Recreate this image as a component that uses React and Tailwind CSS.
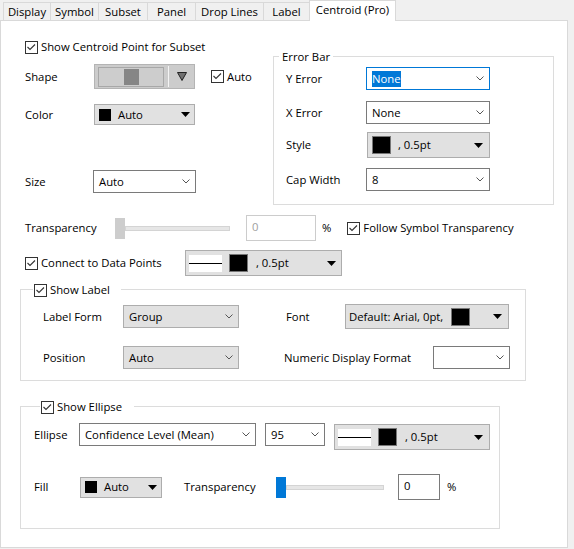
import React from 'react'

const TABS = [
  { label: 'Display', cls: 'w-[47px]' },
  { label: 'Symbol', cls: 'w-[48px]' },
  { label: 'Subset', cls: 'w-[49px]' },
  { label: 'Panel', cls: 'w-[48px]' },
  { label: 'Drop Lines', cls: 'w-[68px]' },
  { label: 'Label', cls: 'w-[46px]' },
]

function Check() {
  return (
    <span className="flex h-[13px] w-[13px] shrink-0 items-center justify-center border border-[#333333] bg-white">
      <svg width="11" height="11" viewBox="0 0 11 11" aria-hidden="true">
        <path d="M1.5 5 L4 7.5 L9 2.5" fill="none" stroke="#333333" strokeWidth="1.1" />
      </svg>
    </span>
  )
}

function Chevron() {
  return (
    <svg width="8" height="5" viewBox="0 0 8 5" aria-hidden="true">
      <path d="M0.5 0.5 L4 4 L7.5 0.5" fill="none" stroke="#555555" strokeWidth="1" />
    </svg>
  )
}

function Arrow() {
  return (
    <svg width="9" height="5" viewBox="0 0 9 5" aria-hidden="true">
      <path d="M0 0 H9 L4.5 5 Z" fill="#000000" />
    </svg>
  )
}

function LineSample() {
  return (
    <span className="flex h-[17px] w-[33px] items-center bg-white">
      <span className="h-px w-full bg-black" />
    </span>
  )
}

function Swatch() {
  return <span className="h-[18px] w-[19px] shrink-0 border border-[#777777] bg-black" />
}

function CheckLabel({ children, className = '' }) {
  return (
    <div className={`flex items-center gap-[3px] ${className}`}>
      <Check />
      <span>{children}</span>
    </div>
  )
}

function Tabs() {
  return (
    <div className="flex h-[21px] items-end">
      <div className="h-full w-[3px] border-b border-[#d9d9d9]" />
      {TABS.map((t) => (
        <div
          key={t.label}
          className={`flex h-[19px] items-center justify-center border-y border-l border-[#d9d9d9] bg-[#f0f0f0] ${t.cls}`}
        >
          {t.label}
        </div>
      ))}
      <div className="flex h-[21px] w-[87px] items-center justify-center border-x border-t border-[#d9d9d9] bg-white pb-[2px]">
        Centroid (Pro)
      </div>
      <div className="h-full flex-1 border-b border-[#d9d9d9]" />
    </div>
  )
}

function ShapeBox() {
  return (
    <div className="flex h-[25px] w-[101px] items-center border border-[#b4b4b4] bg-[#cccccc] pl-[3px]">
      <div className="flex h-[20px] w-[66px] items-center justify-center border border-[#a8a8a8] bg-[#cdcdcd]">
        <span className="h-[16px] w-[15px] bg-[#868686]" />
      </div>
      <span className="ml-[4px] h-[21px] w-px bg-[#f4f4f4]" />
      <svg className="ml-[8px]" width="10" height="9" viewBox="0 0 10 9" aria-hidden="true">
        <path d="M0.5 0.5 H9.5 L5 8.5 Z" fill="#707070" stroke="#222222" strokeWidth="1" />
      </svg>
    </div>
  )
}

function ErrorBar() {
  return (
    <div className="mt-[35px] h-[149px] w-[281px] border border-[#dcdcdc]">
      <div className="-mt-[8px] ml-[5px] w-fit bg-white px-[3px] leading-[16px]">Error Bar</div>
      <div className="flex flex-col pl-[12px]">
        <div className="mt-[2px] flex h-[23px] items-center">
          <span className="w-[80px]">Y Error</span>
          <div className="flex h-[23px] w-[124px] items-center border border-[#0078d7] bg-white pl-[5px] pr-[5px]">
            <span className="bg-[#0078d7] leading-[16px] text-white">None</span>
            <span className="ml-auto flex"><Chevron /></span>
          </div>
        </div>
        <div className="mt-[11px] flex h-[23px] items-center">
          <span className="w-[80px]">X Error</span>
          <div className="flex h-[23px] w-[124px] items-center border border-[#7a7a7a] bg-white pl-[5px] pr-[5px]">
            <span>None</span>
            <span className="ml-auto flex"><Chevron /></span>
          </div>
        </div>
        <div className="mt-[8px] flex h-[26px] items-center">
          <span className="w-[81px]">Style</span>
          <div className="flex h-[26px] w-[123px] items-center border border-[#adadad] bg-[#e1e1e1] pl-[4px] pr-[6px]">
            <Swatch />
            <span className="ml-[7px]">, 0.5pt</span>
            <span className="ml-auto flex"><Arrow /></span>
          </div>
        </div>
        <div className="mt-[10px] flex h-[23px] items-center">
          <span className="w-[80px]">Cap Width</span>
          <div className="flex h-[23px] w-[124px] items-center border border-[#7a7a7a] bg-white pl-[5px] pr-[5px]">
            <span>8</span>
            <span className="ml-auto flex"><Chevron /></span>
          </div>
        </div>
      </div>
    </div>
  )
}

function ShowLabel() {
  return (
    <div className="ml-[19px] mt-[13px] h-[92px] w-[506px] border border-[#dcdcdc]">
      <div className="-mt-[8px] ml-[12px] flex h-[16px] w-fit items-center gap-[3px] bg-white pl-px pr-[11px]">
        <Check />
        <span>Show Label</span>
      </div>
      <div className="mt-[6px] flex h-[25px] items-center pl-[22px]">
        <span className="w-[80px]">Label Form</span>
        <div className="flex h-[23px] w-[116px] items-center border border-[#adadad] bg-[#e1e1e1] pl-[5px] pr-[5px]">
          <span>Group</span>
          <span className="ml-auto flex"><Chevron /></span>
        </div>
        <span className="ml-[47px] w-[59px]">Font</span>
        <div className="flex h-[25px] w-[164px] items-center border border-[#adadad] bg-[#e1e1e1] pl-[3px] pr-[6px]">
          <span className="w-[102px] whitespace-nowrap">Default: Arial, 0pt,</span>
          <Swatch />
          <span className="ml-auto flex"><Arrow /></span>
        </div>
      </div>
      <div className="mt-[17px] flex h-[23px] items-center pl-[22px]">
        <span className="w-[80px]">Position</span>
        <div className="flex h-[23px] w-[116px] items-center border border-[#adadad] bg-[#e1e1e1] pl-[5px] pr-[5px]">
          <span>Auto</span>
          <span className="ml-auto flex"><Chevron /></span>
        </div>
        <span className="ml-[45px] w-[149px]">Numeric Display Format</span>
        <div className="flex h-[23px] w-[77px] items-center border border-[#7a7a7a] bg-white pr-[5px]">
          <span className="ml-auto flex"><Chevron /></span>
        </div>
      </div>
    </div>
  )
}

function ShowEllipse() {
  return (
    <div className="ml-[19px] mt-[25px] h-[123px] w-[480px] border border-[#dcdcdc]">
      <div className="-mt-[8px] ml-[19px] flex h-[16px] w-fit items-center gap-[3px] bg-white pl-px pr-[12px]">
        <Check />
        <span>Show Ellipse</span>
      </div>
      <div className="mt-[8px] flex h-[26px] items-start pl-[13px]">
        <span className="flex h-[23px] w-[45px] items-center">Ellipse</span>
        <div className="flex h-[23px] w-[177px] items-center border border-[#7a7a7a] bg-white pl-[5px] pr-[5px]">
          <span>Confidence Level (Mean)</span>
          <span className="ml-auto flex"><Chevron /></span>
        </div>
        <div className="ml-[9px] flex h-[23px] w-[60px] items-center border border-[#7a7a7a] bg-white pl-[5px] pr-[5px]">
          <span>95</span>
          <span className="ml-auto flex"><Chevron /></span>
        </div>
        <div className="ml-[9px] mt-px flex h-[26px] w-[156px] items-center border border-[#adadad] bg-[#e1e1e1] pl-[3px] pr-[6px]">
          <LineSample />
          <span className="ml-[7px] flex"><Swatch /></span>
          <span className="ml-[8px]">, 0.5pt</span>
          <span className="ml-auto flex"><Arrow /></span>
        </div>
      </div>
      <div className="mt-[25px] flex h-[26px] items-center pl-[13px]">
        <span className="w-[46px]">Fill</span>
        <div className="flex h-[21px] w-[82px] items-center border border-[#adadad] bg-[#e1e1e1] pl-[4px] pr-[4px]">
          <span className="h-[12px] w-[12px] bg-black" />
          <span className="ml-[7px]">Auto</span>
          <span className="ml-auto flex"><Arrow /></span>
        </div>
        <span className="ml-[22px] w-[92px]">Transparency</span>
        <span className="h-[21px] w-[10px] bg-[#0078d7]" />
        <span className="h-[5px] w-[98px] border border-[#d4d4d4] bg-[#e6e6e6]" />
        <div className="ml-[14px] flex h-[26px] w-[42px] items-center border border-[#7a7a7a] bg-white pb-[2px] pl-[5px]">
          0
        </div>
        <span className="ml-[7px]">%</span>
      </div>
    </div>
  )
}

export default function App() {
  return (
    <div className="h-[549px] w-[574px] bg-[#f0f0f0] font-['Open_Sans',sans-serif] text-[11.3px] leading-none text-black">
      <div className="w-[568px]">
        <Tabs />
        <div className="flex h-[527px] flex-col border-x border-b border-[#d9d9d9] bg-white">
          <div className="flex pl-[24px]">
            <div className="flex w-[248px] flex-col">
              <CheckLabel className="mt-[19px] h-[14px]">Show Centroid Point for Subset</CheckLabel>
              <div className="mt-[10px] flex h-[25px] items-center">
                <span className="w-[69px]">Shape</span>
                <ShapeBox />
                <CheckLabel className="ml-[16px]">Auto</CheckLabel>
              </div>
              <div className="mt-[15px] flex h-[21px] items-center">
                <span className="w-[69px]">Color</span>
                <div className="flex h-[21px] w-[101px] items-center border border-[#adadad] bg-[#e1e1e1] pl-[4px] pr-[4px]">
                  <span className="h-[12px] w-[12px] bg-black" />
                  <span className="ml-[7px]">Auto</span>
                  <span className="ml-auto flex"><Arrow /></span>
                </div>
              </div>
              <div className="mt-[45px] flex h-[23px] items-center">
                <span className="w-[68px]">Size</span>
                <div className="flex h-[23px] w-[103px] items-center border border-[#7a7a7a] bg-white pl-[5px] pr-[5px]">
                  <span>Auto</span>
                  <span className="ml-auto flex"><Chevron /></span>
                </div>
              </div>
            </div>
            <ErrorBar />
          </div>

          <div className="mt-[10px] flex h-[26px] items-center pl-[24px]">
            <span className="w-[90px]">Transparency</span>
            <span className="h-[21px] w-[10px] bg-[#cdcdcd]" />
            <span className="h-[5px] w-[105px] border border-[#d4d4d4] bg-[#e6e6e6]" />
            <div className="ml-[16px] flex h-[26px] w-[70px] items-center border border-[#cccccc] bg-white pb-[2px] pl-[5px] text-[#a0a0a0]">
              0
            </div>
            <span className="ml-[6px]">%</span>
            <CheckLabel className="ml-[16px]">Follow Symbol Transparency</CheckLabel>
          </div>

          <div className="mt-[9px] flex h-[26px] items-center pl-[24px]">
            <CheckLabel className="w-[160px]">Connect to Data Points</CheckLabel>
            <div className="flex h-[26px] w-[157px] items-center border border-[#adadad] bg-[#e1e1e1] pl-[3px] pr-[5px]">
              <LineSample />
              <span className="ml-[7px] flex"><Swatch /></span>
              <span className="ml-[8px]">, 0.5pt</span>
              <span className="ml-auto flex"><Arrow /></span>
            </div>
          </div>

          <ShowLabel />
          <ShowEllipse />
        </div>
      </div>
    </div>
  )
}
